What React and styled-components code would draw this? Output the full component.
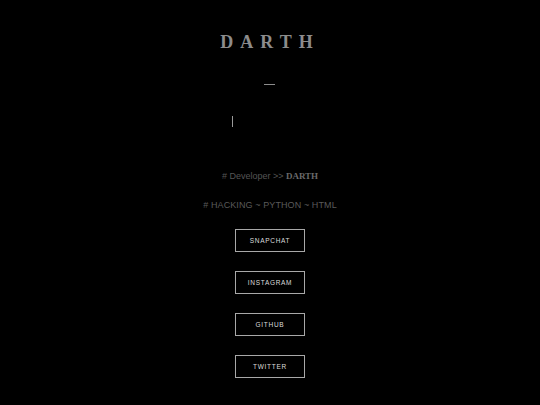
import React from 'react';
import styled, { createGlobalStyle } from 'styled-components';

const GlobalStyle = createGlobalStyle`
  html, body {
    margin: 0;
    padding: 0;
    background: #000;
  }
  body {
    font-family: "Liberation Sans", Arial, sans-serif;
  }
`;

const Page = styled.div`
  width: 540px;
  height: 405px;
  background: #000;
  display: flex;
  flex-direction: column;
  align-items: center;
  overflow: hidden;
`;

const Title = styled.h1`
  margin: 33px 0 0 0;
  font-family: "Liberation Serif", "Times New Roman", serif;
  font-size: 18px;
  font-weight: 700;
  letter-spacing: 7px;
  color: #8c8c8c;
  line-height: 18px;
`;

const Stage = styled.div`
  width: 540px;
  height: 119px;
  position: relative;
`;

const Dash = styled.span`
  position: absolute;
  left: 264px;
  top: 33px;
  width: 11px;
  height: 1px;
  background: #8c8c8c;
`;

const Cursor = styled.span`
  position: absolute;
  left: 232px;
  top: 65px;
  width: 1px;
  height: 11px;
  background: #9a9a9a;
`;

const Tagline = styled.p`
  margin: 0;
  font-size: 9px;
  color: #555;
  line-height: 12px;
`;

const Strong = styled.b`
  font-family: "Liberation Serif", "Times New Roman", serif;
  font-size: 9px;
  color: #6a6a6a;
`;

const Skills = styled.p`
  margin: 17px 0 0;
  font-size: 9px;
  color: #5a5a5a;
  line-height: 12px;
  letter-spacing: 0.1px;
`;

const Links = styled.div`
  margin-top: 18px;
  display: flex;
  flex-direction: column;
  align-items: center;
  gap: 19px;
`;

const Button = styled.a`
  box-sizing: border-box;
  width: 70px;
  height: 23px;
  border: 1px solid #a8a8a8;
  display: flex;
  align-items: center;
  justify-content: center;
  color: #dcdcdc;
  font-family: "Liberation Sans", Arial, sans-serif;
  font-size: 6.5px;
  font-weight: 400;
  letter-spacing: 0.7px;
  text-transform: uppercase;
  text-decoration: none;
`;

const links = ['Snapchat', 'Instagram', 'Github', 'Twitter'];

export default function App() {
  return (
    <Page>
      <GlobalStyle />
      <Title>DARTH</Title>
      <Stage>
        <Dash />
        <Cursor />
      </Stage>
      <Tagline>
        # Developer &gt;&gt; <Strong>DARTH</Strong>
      </Tagline>
      <Skills># HACKING ~ PYTHON ~ HTML</Skills>
      <Links>
        {links.map((l) => (
          <Button key={l} href="#">
            {l}
          </Button>
        ))}
      </Links>
    </Page>
  );
}
